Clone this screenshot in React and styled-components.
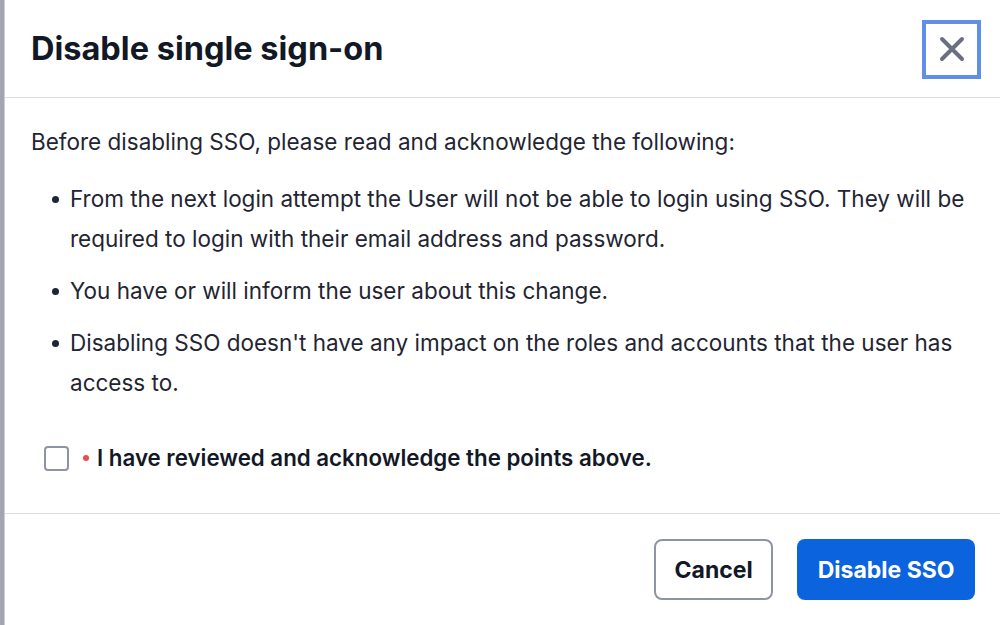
import React from "react";
import styled, { createGlobalStyle } from "styled-components";

const Global = createGlobalStyle`
    html, body {
        margin: 0;
        padding: 0;
        background: #a3a6b2;
        overflow: hidden;
    }
    body {
        font-family: "Inter", "Noto Sans", sans-serif;
        -webkit-font-smoothing: antialiased;
    }
`

const Page = styled.div`
    width: 1000px;
    height: 625px;
    display: flex;
    padding-left: 4px;
    box-sizing: border-box;
`

const Modal = styled.div`
    flex: 1;
    background: #ffffff;
    border-left: 1px solid #c9ccd4;
    display: flex;
    flex-direction: column;
    color: #1f2533;
`

const Header = styled.div`
    height: 98px;
    box-sizing: border-box;
    border-bottom: 1px solid #dcdee5;
    display: flex;
    align-items: center;
    justify-content: space-between;
    padding: 0 19px 0 26px;

    h2 {
        margin: 0;
        font-size: 32.5px;
        font-weight: 700;
        color: #121826;
    }
`

const CloseButton = styled.button`
    width: 59px;
    height: 59px;
    box-sizing: border-box;
    border: 4px solid #5f8fe9;
    background: #ffffff;
    display: flex;
    align-items: center;
    justify-content: center;
    padding: 0;
    margin-top: 1px;
    cursor: pointer;
`

const Body = styled.div`
    padding: 24px 25px 42px 26px;
    border-bottom: 1px solid #dcdee5;
    font-size: 22.5px;
    line-height: 40px;

    p {
        margin: 0;
    }
`

const List = styled.ul`
    list-style: none;
    margin: 17px 0 0;
    padding: 0 0 0 39px;
    display: flex;
    flex-direction: column;
    gap: 12px;
`

const Item = styled.li`
    position: relative;

    &::before {
        content: "";
        position: absolute;
        left: -18px;
        top: 17px;
        width: 7px;
        height: 7px;
        border-radius: 50%;
        background: #1f2533;
    }
`

const CheckRow = styled.label`
    display: flex;
    align-items: center;
    margin-top: 42px;
    padding-left: 13px;
    font-size: 22.3px;
    font-weight: 600;
    color: #121826;
    line-height: 26px;
`

const Box = styled.span`
    width: 25px;
    height: 25px;
    box-sizing: border-box;
    border: 2px solid #8f94a3;
    border-radius: 4px;
    margin-right: 14px;
`

const Required = styled.span`
    width: 6px;
    height: 6px;
    border-radius: 50%;
    background: #ef4b4b;
    margin-right: 8px;
`

const Footer = styled.div`
    display: flex;
    justify-content: flex-end;
    gap: 24px;
    padding: 25px 25px 0;
`

const Button = styled.button`
    height: 61px;
    padding: 0 ${(p) => (p.primary ? "20.5px" : "18.5px")};
    border-radius: 8px;
    font-family: "Inter", "Noto Sans", sans-serif;
    font-size: 23px;
    font-weight: 700;
    cursor: pointer;
    box-sizing: border-box;
    border: ${(p) => (p.primary ? "none" : "2px solid #8f94a3")};
    background: ${(p) => (p.primary ? "#0b63de" : "#ffffff")};
    color: ${(p) => (p.primary ? "#ffffff" : "#121826")};
`

const App = () => {
    return (
        <>
            <Global />
            <Page>
                <Modal>
                    <Header>
                        <h2>Disable single sign-on</h2>
                        <CloseButton aria-label="Close">
                            <svg width="26" height="26" viewBox="0 0 26 26">
                                <path d="M3 3 L23 23 M23 3 L3 23" stroke="#6b7080" strokeWidth="4" strokeLinecap="round" />
                            </svg>
                        </CloseButton>
                    </Header>
                    <Body>
                        <p>Before disabling SSO, please read and acknowledge the following:</p>
                        <List>
                            <Item>From the next login attempt the User will not be able to login using SSO. They will be required to login with their email address and password.</Item>
                            <Item>You have or will inform the user about this change.</Item>
                            <Item>Disabling SSO doesn't have any impact on the roles and accounts that the user has access to.</Item>
                        </List>
                        <CheckRow>
                            <Box />
                            <Required />
                            I have reviewed and acknowledge the points above.
                        </CheckRow>
                    </Body>
                    <Footer>
                        <Button>Cancel</Button>
                        <Button primary>Disable SSO</Button>
                    </Footer>
                </Modal>
            </Page>
        </>
    )
}

export default App;
